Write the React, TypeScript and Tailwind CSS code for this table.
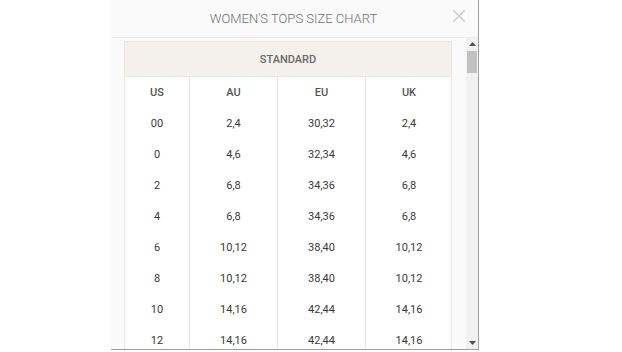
import React from 'react';

// Women's tops size chart modal
const rows: [string, string, string, string][] = [
  ['00', '2,4', '30,32', '2,4'],
  ['0', '4,6', '32,34', '4,6'],
  ['2', '6,8', '34,36', '6,8'],
  ['4', '6,8', '34,36', '6,8'],
  ['6', '10,12', '38,40', '10,12'],
  ['8', '10,12', '38,40', '10,12'],
  ['10', '14,16', '42,44', '14,16'],
  ['12', '14,16', '42,44', '14,16'],
];

const cols = 'grid grid-cols-[65px_88px_88px_86px]';

function Row({ cells, className = '' }: { cells: string[]; className?: string }) {
  return (
    <div className={`${cols} ${className}`}>
      {cells.map((c, i) => (
        <div
          key={i}
          className={`h-[31px] pt-[2px] flex items-center justify-center ${i < 3 ? 'border-r border-[#ebe7e1]' : ''}`}
        >
          {c}
        </div>
      ))}
    </div>
  );
}

function Scrollbar() {
  return (
    <div className="w-[12px] shrink-0 bg-[#f1f1f1] flex flex-col items-center pt-[4px]">
      <svg width="7" height="4" viewBox="0 0 7 4" className="shrink-0">
        <path d="M0 4 L3.5 0 L7 4 Z" fill="#505050" />
      </svg>
      <div className="mt-[5px] w-[10px] h-[22px] bg-[#c1c1c1] shrink-0" />
      <div className="flex-1" />
      <svg width="7" height="4" viewBox="0 0 7 4" className="shrink-0 mb-[4px]">
        <path d="M0 0 L3.5 4 L7 0 Z" fill="#505050" />
      </svg>
    </div>
  );
}

export default function App() {
  return (
    <div className="w-[622px] h-[352px] bg-white overflow-hidden font-['Roboto','Liberation_Sans',sans-serif]">
      <div className="ml-[111px] w-[368px] h-[350px] bg-[#fafafa] border-r border-b border-[#a0a0a0] flex flex-col">
        {/* Header */}
        <div className="h-[38px] shrink-0 border-b border-[#ececec] flex items-center relative">
          <div className="flex-1 text-center text-[13px] font-light text-[#707070] pt-[1px] pr-[2px]">
            WOMEN&#39;S TOPS SIZE CHART
          </div>
          <svg
            width="12"
            height="12"
            viewBox="0 0 12 12"
            className="absolute right-[13px] top-[10px]"
          >
            <path d="M0.5 0.5 L11.5 11.5 M11.5 0.5 L0.5 11.5" stroke="#c4c4c4" strokeWidth="1.1" />
          </svg>
        </div>

        {/* Body */}
        <div className="flex-1 flex min-h-0">
          <div className="flex-1 overflow-hidden pl-[13px] pt-[3px]">
            <div className="w-[328px] bg-white border border-[#ebe7e1] text-[11px] text-[#3a3a3a]">
              <div className="h-[35px] pt-[3px] bg-[#f4f1ec] border-b border-[#ebe7e1] flex items-center justify-center font-medium text-[#6a6a6a]">
                STANDARD
              </div>
              <Row cells={['US', 'AU', 'EU', 'UK']} className="font-medium text-[#555]" />
              {rows.map((r, i) => (
                <Row key={i} cells={r} />
              ))}
            </div>
          </div>
          <Scrollbar />
        </div>
      </div>
    </div>
  );
}
